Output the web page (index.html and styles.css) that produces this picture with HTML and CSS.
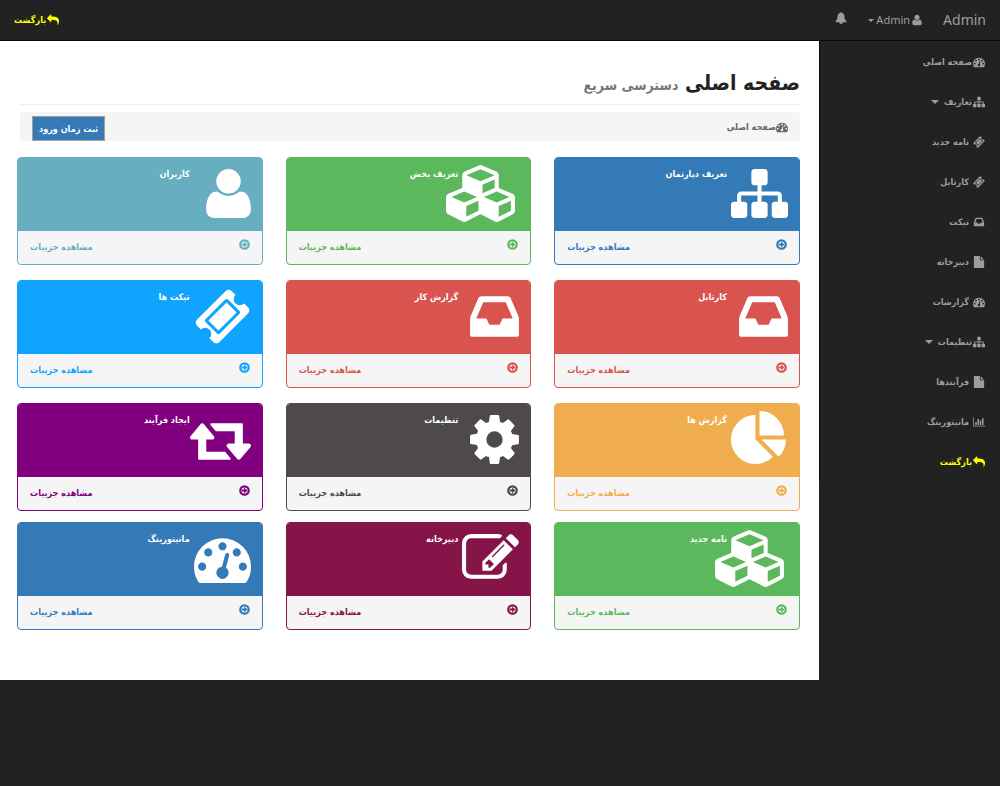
FILE: index.html
```html
<!DOCTYPE html>
<html lang="fa" dir="rtl">
<head>
<meta charset="utf-8">
<meta name="viewport" content="width=device-width, initial-scale=1">
<title>صفحه اصلی</title>
<link rel="stylesheet" href="styles.css">
</head>
<body>
<svg class="sprite" aria-hidden="true">
  <symbol id="sitemap" viewBox="0 0 1792 1792"><path d="M1792 1248v320q0 40-28 68t-68 28h-320q-40 0-68-28t-28-68v-320q0-40 28-68t68-28h96v-192h-512v192h96q40 0 68 28t28 68v320q0 40-28 68t-68 28h-320q-40 0-68-28t-28-68v-320q0-40 28-68t68-28h96v-192h-512v192h96q40 0 68 28t28 68v320q0 40-28 68t-68 28h-320q-40 0-68-28t-28-68v-320q0-40 28-68t68-28h96v-192q0-52 38-90t90-38h512v-192h-96q-40 0-68-28t-28-68v-320q0-40 28-68t68-28h320q40 0 68 28t28 68v320q0 40-28 68t-68 28h-96v192h512q52 0 90 38t38 90v192h96q40 0 68 28t28 68z"/></symbol>
  <symbol id="user" viewBox="192 0 1408 1792"><path d="M1600 1405q0 120-73 189.500t-194 69.500h-874q-121 0-194-69.500t-73-189.500q0-53 3.500-103.500t14-109 26.500-108.500 43-97.500 62-81 85.500-53.500 111.500-20q9 0 42 21.500t74.500 48 108 48 133.500 21.500 133.500-21.500 108-48 74.500-48 42-21.500q61 0 111.500 20t85.500 53.500 62 81 43 97.500 26.500 108.500 14 109 3.500 103.500zm-320-893q0 159-112.500 271.500t-271.500 112.500-271.500-112.500-112.500-271.500 112.500-271.500 271.500-112.500 271.500 112.500 112.500 271.500z"/></symbol>
  <symbol id="bell" viewBox="0 0 1792 1792"><path d="M912 1696q0-16-16-16-59 0-101.500-42.500t-42.500-101.500q0-16-16-16t-16 16q0 73 51.500 124.500t124.500 51.500q16 0 16-16zm816-288q0 52-38 90t-90 38h-448q0 106-75 181t-181 75-181-75-75-181h-448q-52 0-90-38t-38-90q50-42 91-88t85-119.500 74.500-158.500 50-206 19.500-260q0-152 117-282.500t307-158.500q-8-19-8-39 0-40 28-68t68-28 68 28 28 68q0 20-8 39 190 28 307 158.500t117 282.500q0 139 19.500 260t50 206 74.500 158.500 85 119.500 91 88z"/></symbol>
  <symbol id="inbox" viewBox="128 0 1536 1792"><path d="M1151 960h316q-1-3-2.500-8.500t-2.500-7.500l-212-496h-708l-212 496q-1 3-2.500 8t-2.500 8h316l95 192h320zm513 30v482q0 26-19 45t-45 19h-1408q-26 0-45-19t-19-45v-482q0-62 25-123l238-552q10-25 36.500-42t52.500-17h832q26 0 52.500 17t36.500 42l238 552q25 61 25 123z"/></symbol>
  <symbol id="cog" viewBox="128 0 1536 1792"><path d="M1152 896q0-106-75-181t-181-75-181 75-75 181 75 181 181 75 181-75 75-181zm512-109v222q0 12-8 23t-20 13l-185 28q-19 54-39 91 35 50 107 138 10 12 10 25t-9 23q-27 37-99 108t-94 71q-12 0-26-9l-138-108q-44 23-91 38-16 136-29 186-7 28-36 28h-222q-14 0-24.500-8.500t-11.500-21.500l-28-184q-49-16-90-37l-141 107q-10 9-25 9-14 0-25-11-126-114-165-168-7-10-7-23 0-12 8-23 15-21 51-66.500t54-70.500q-27-50-41-99l-183-27q-13-2-21-12.500t-8-23.500v-222q0-12 8-23t19-13l186-28q14-46 39-92-40-57-107-138-10-12-10-24 0-10 9-23 26-36 98.500-107.500t94.500-71.500q13 0 26 10l138 107q44-23 91-38 16-136 29-186 7-28 36-28h222q14 0 24.500 8.500t11.500 21.500l28 184q49 16 90 37l142-107q9-9 24-9 13 0 25 10 129 119 165 170 7 8 7 22 0 12-8 23-15 21-51 66.500t-54 70.500q26 50 41 98l183 28q13 2 21 12.500t8 23.500z"/></symbol>
  <symbol id="pie" viewBox="0 0 1792 1792"><path d="M768 890l546 546q-106 108-247.500 168t-298.500 60q-209 0-385.500-103t-279.500-279.500-103-385.500 103-385.500 279.500-279.500 385.500-103v762zm187 6h773q0 157-60 298.500t-168 247.500zm709-128h-768v-768q209 0 385.500 103t279.500 279.500 103 385.500z"/></symbol>
  <symbol id="retweet" viewBox="0 0 1920 1792"><path d="M1280 1504q0 13-9.500 22.500t-22.500 9.500h-960q-8 0-13.500-2t-9-7-5.500-8-3-11.500-1-11.500v-600h-192q-26 0-45-19t-19-45q0-24 15-41l320-384q19-22 49-22t49 22l320 384q15 17 15 41 0 26-19 45t-45 19h-192v384h576q16 0 25 11l160 192q7 10 7 21zm640-416q0 24-15 41l-320 384q-20 23-49 23t-49-23l-320-384q-15-17-15-41 0-26 19-45t45-19h192v-384h-576q-16 0-25-12l-160-192q-7-9-7-20 0-13 9.500-22.500t22.500-9.500h960q8 0 13.500 2t9 7 5.500 8 3 11.500 1 11.500v600h192q26 0 45 19t19 45z"/></symbol>
  <symbol id="ticket" viewBox="0 0 1792 1792"><path d="M1024 452l316 316-572 572-316-316zm-211 979l618-618q19-19 19-45t-19-45l-362-362q-18-18-45-18t-45 18l-618 618q-19 19-19 45t19 45l362 362q18 18 45 18t45-18zm889-637l-907 908q-37 37-90.500 37t-90.500-37l-126-126q56-56 56-136t-56-136-136-56-136 56l-125-126q-37-37-37-90.500t37-90.500l907-906q37-37 90.500-37t90.500 37l125 125q-56 56-56 136t56 136 136 56 136-56l126 125q37 37 37 90.500t-37 90.500z"/></symbol>
  <symbol id="gauge" viewBox="0 0 1792 1792"><path d="M384 1152q0-53-37.500-90.500t-90.500-37.500-90.500 37.500-37.500 90.500 37.500 90.500 90.500 37.500 90.500-37.500 37.500-90.500zm192-448q0-53-37.500-90.500t-90.500-37.500-90.500 37.500-37.500 90.500 37.500 90.500 90.500 37.500 90.500-37.500 37.500-90.500zm428 481l101-382q6-26-7.500-48.500t-38.500-29.500-48 6.500-30 39.500l-101 382q-60 5-107 43.500t-63 98.500q-20 77 20 146t117 89 146-20 89-117q16-60-6-117t-72-91zm660-33q0-53-37.500-90.500t-90.500-37.500-90.500 37.500-37.500 90.500 37.500 90.500 90.500 37.500 90.500-37.500 37.500-90.500zm-640-640q0-53-37.500-90.500t-90.500-37.500-90.500 37.500-37.500 90.500 37.500 90.500 90.500 37.500 90.500-37.500 37.500-90.500zm448 192q0-53-37.500-90.500t-90.500-37.500-90.500 37.500-37.500 90.500 37.500 90.500 90.500 37.500 90.500-37.500 37.500-90.500zm320 448q0 261-141 483-19 29-54 29h-1402q-35 0-54-29-141-221-141-483 0-182 71-348t191-286 286-191 348-71 348 71 286 191 191 286 71 348z"/></symbol>
  <symbol id="cubes" viewBox="0 0 2304 1792"><path d="M640 1632l384-192v-314l-384 164v342zm-64-454l404-173-404-173-404 173zm1088 454l384-192v-314l-384 164v342zm-64-454l404-173-404-173-404 173zm-448-293l384-165v-266l-384 164v267zm-64-379l441-189-441-189-441 189zm1088 518v416q0 36-19 67t-52 47l-448 224q-25 14-57 14t-57-14l-448-224q-4-2-7-4-2 2-7 4l-448 224q-25 14-57 14t-57-14l-448-224q-33-16-52-47t-19-67v-416q0-38 21.500-70t56.500-48l434-186v-400q0-38 21.500-70t56.500-48l448-192q23-10 50-10t50 10l448 192q35 16 56.500 48t21.500 70v400l434 186q36 16 57 48t21 70z"/></symbol>
  <symbol id="edit" viewBox="0 0 1792 1792"><path d="M888 1184l116-116-152-152-116 116v56h96v96h56zm440-720q-16-16-33 1l-350 350q-17 17-1 33t33-1l350-350q17-17 1-33zm80 594v190q0 119-84.500 203.500t-203.500 84.500h-832q-119 0-203.500-84.500t-84.500-203.500v-832q0-119 84.500-203.500t203.500-84.500h832q63 0 117 25 15 7 18 23 3 17-9 29l-49 49q-14 14-32 8-23-6-45-6h-832q-66 0-113 47t-47 113v832q0 66 47 113t113 47h832q66 0 113-47t47-113v-126q0-13 9-22l64-64q15-15 35-7t20 29zm-96-738l288 288-672 672h-288v-288zm444 132l-92 92-288-288 92-92q28-28 68-28t68 28l152 152q28 28 28 68t-28 68z"/></symbol>
  <symbol id="file" viewBox="128 0 1536 1792"><path d="M1152 512v-472q22 14 36 28l408 408q14 14 28 36h-472zm-128 32q0 40 28 68t68 28h544v1056q0 40-28 68t-68 28h-1344q-40 0-68-28t-28-68v-1600q0-40 28-68t68-28h800v544z"/></symbol>
  <symbol id="chart" viewBox="0 0 2048 1792"><path d="M640 896v512h-256v-512h256zm384-512v1024h-256v-1024h256zm1024 1152v128h-2048v-1536h128v1408h1920zm-640-896v768h-256v-768h256zm384-384v1152h-256v-1152h256z"/></symbol>
  <symbol id="reply" viewBox="0 0 1792 1792"><path transform="matrix(-1 0 0 1 1792 0)" d="M1792 640q0 26-19 45l-512 512q-19 19-45 19t-45-19-19-45v-256h-224q-98 0-175.500 6t-154 21.500-133 42.500-105.500 69.500-80 101-48.500 138.500-17.500 181q0 55 5 123 0 6 2.500 23.500t2.500 26.500q0 15-8.500 25t-23.500 10q-16 0-28-17-7-9-13-22t-13.500-30-10.500-24q-127-285-127-451 0-199 53-333 162-403 875-403h224v-256q0-26 19-45t45-19 45 19l512 512q19 19 19 45z"/></symbol>
  <symbol id="go" viewBox="0 0 12 12"><circle cx="6" cy="6" r="4.600" fill="none" stroke="currentColor" stroke-width="2.400"/><path d="M3 4.800h2.600v-2.200l3.600 3.400-3.600 3.400v-2.200h-2.600z"/></symbol>
</svg>

<header class="topbar">
  <a class="brand" href="#">Admin</a>
  <button class="top-item" type="button"><svg class="icon-user"><use href="#user"/></svg><span>Admin</span><i class="caret"></i></button>
  <button class="top-item bell" type="button" aria-label="اعلان‌ها"><svg class="icon"><use href="#bell"/></svg></button>
  <a class="back" href="#"><svg class="icon"><use href="#reply"/></svg>بازگشت</a>
</header>

<div class="layout">
  <nav class="sidebar">
    <a href="#"><svg class="icon"><use href="#gauge"/></svg>صفحه اصلی</a>
    <a href="#"><svg class="icon"><use href="#sitemap"/></svg>تعاریف<i class="caret"></i></a>
    <a class="spaced" href="#"><svg class="icon"><use href="#ticket"/></svg>نامه جدید</a>
    <a class="spaced" href="#"><svg class="icon"><use href="#ticket"/></svg>کارتابل</a>
    <a class="spaced" href="#"><svg class="icon"><use href="#inbox"/></svg>تیکت</a>
    <a class="spaced" href="#"><svg class="icon"><use href="#file"/></svg>دبیرخانه</a>
    <a class="spaced" href="#"><svg class="icon"><use href="#gauge"/></svg>گزارشات</a>
    <a href="#"><svg class="icon"><use href="#sitemap"/></svg>تنظیمات<i class="caret"></i></a>
    <a class="spaced" href="#"><svg class="icon"><use href="#file"/></svg>فرآیندها</a>
    <a class="spaced" href="#"><svg class="icon"><use href="#chart"/></svg>مانیتورینگ</a>
    <a class="back" href="#"><svg class="icon"><use href="#reply"/></svg>بازگشت</a>
  </nav>

  <main class="page">
    <h1 class="title">صفحه اصلی <small>دسترسی سریع</small></h1>
    <div class="breadcrumb">
      <span class="crumb"><svg class="icon"><use href="#gauge"/></svg>صفحه اصلی</span>
      <button class="enter" type="button">ثبت زمان ورود</button>
    </div>

    <div class="cards">
      <section class="card blue"><div class="head"><div class="pic"><svg class="w57"><use href="#sitemap"/></svg></div><h2>تعریف دپارتمان</h2></div><a class="more" href="#"><svg><use href="#go"/></svg>مشاهده جزییات</a></section>
      <section class="card green"><div class="head"><div class="pic"><svg class="w73"><use href="#cubes"/></svg></div><h2>تعریف بخش</h2></div><a class="more" href="#"><svg><use href="#go"/></svg>مشاهده جزییات</a></section>
      <section class="card teal"><div class="head"><div class="pic"><svg class="w45"><use href="#user"/></svg></div><h2>کاربران</h2></div><a class="more" href="#"><svg><use href="#go"/></svg>مشاهده جزییات</a></section>
      <section class="card red"><div class="head"><div class="pic"><svg class="w49"><use href="#inbox"/></svg></div><h2>کارتابل</h2></div><a class="more" href="#"><svg><use href="#go"/></svg>مشاهده جزییات</a></section>
      <section class="card red"><div class="head"><div class="pic"><svg class="w49"><use href="#inbox"/></svg></div><h2>گزارش کار</h2></div><a class="more" href="#"><svg><use href="#go"/></svg>مشاهده جزییات</a></section>
      <section class="card sky"><div class="head"><div class="pic"><svg class="w57"><use href="#ticket"/></svg></div><h2>تیکت ها</h2></div><a class="more" href="#"><svg><use href="#go"/></svg>مشاهده جزییات</a></section>
      <section class="card orange"><div class="head"><div class="pic"><svg class="w57"><use href="#pie"/></svg></div><h2>گزارش ها</h2></div><a class="more" href="#"><svg><use href="#go"/></svg>مشاهده جزییات</a></section>
      <section class="card grey"><div class="head"><div class="pic"><svg class="w49"><use href="#cog"/></svg></div><h2>تنظیمات</h2></div><a class="more" href="#"><svg><use href="#go"/></svg>مشاهده جزییات</a></section>
      <section class="card purple"><div class="head"><div class="pic"><svg class="w61"><use href="#retweet"/></svg></div><h2>ایجاد فرآیند</h2></div><a class="more" href="#"><svg><use href="#go"/></svg>مشاهده جزییات</a></section>
    </div>
    <div class="cards last">
      <section class="card green"><div class="head"><div class="pic"><svg class="w73"><use href="#cubes"/></svg></div><h2>نامه جدید</h2></div><a class="more" href="#"><svg><use href="#go"/></svg>مشاهده جزییات</a></section>
      <section class="card wine"><div class="head"><div class="pic"><svg class="w57"><use href="#edit"/></svg></div><h2>دبیرخانه</h2></div><a class="more" href="#"><svg><use href="#go"/></svg>مشاهده جزییات</a></section>
      <section class="card blue"><div class="head"><div class="pic"><svg class="w57"><use href="#gauge"/></svg></div><h2>مانیتورینگ</h2></div><a class="more" href="#"><svg><use href="#go"/></svg>مشاهده جزییات</a></section>
    </div>
  </main>
</div>
</body>
</html>
```
FILE: styles.css
```css
* { box-sizing: border-box; }
body {
  margin: 0;
  min-height: 100vh;
  background: #222;
  color: #222;
  font: 9px/16px "DejaVu Sans Condensed", "DejaVu Sans", sans-serif;
}
a { color: inherit; text-decoration: none; }
button { font: inherit; color: inherit; cursor: pointer; }
svg { display: block; flex: none; fill: currentColor; overflow: visible; }
.sprite { position: absolute; width: 0; height: 0; }
.icon { width: 12px; height: 12px; }
.icon-user { width: 10px; height: 12px; }
.caret {
  border: 3px solid transparent;
  border-top-color: currentColor;
  border-bottom: 0;
}

.topbar {
  display: flex;
  align-items: center;
  height: 41px;
  padding: 0 14px;
  border-bottom: 1px solid #080808;
  color: #9d9d9d;
}
.brand { font: 14px/20px "Noto Sans", sans-serif; }
.top-item {
  display: flex;
  align-items: center;
  gap: 2px;
  margin-right: 21px;
  padding: 0;
  border: 0;
  background: none;
  font: 11px/16px "Noto Sans", sans-serif;
}
.bell { padding-bottom: 4px; }
.back { display: flex; align-items: center; color: #ff0; font-weight: bold; }
.topbar .back { margin-right: auto; }
.topbar .icon { margin-left: 1px; }

.layout { display: flex; align-items: flex-start; }
.sidebar {
  flex: 0 0 181px;
  border-left: 1px solid #080808;
  color: #9d9d9d;
  font-weight: bold;
}
.sidebar a {
  display: flex;
  align-items: center;
  gap: 1px;
  height: 40px;
  padding: 2px 15px 0;
}
.sidebar .spaced { gap: 4px; }
.sidebar .caret { margin-right: 4px; border-width: 4px 4px 0; }

.page {
  flex: 1;
  min-width: 0;
  padding: 24px 19px 50px 17px;
  background: #fff;
}
.title {
  margin: 0 0 7px 3px;
  padding-bottom: 3px;
  border-bottom: 1px solid #eee;
  font-size: 21px;
  font-weight: bold;
  line-height: 36px;
}
.title small { color: #777; font-size: 14px; font-weight: bold; line-height: 16px; }
.breadcrumb {
  display: flex;
  justify-content: space-between;
  align-items: flex-start;
  height: 29px;
  margin-left: 3px;
  padding: 4px 12px 0;
  border-radius: 4px;
  background: #f5f5f5;
}
.crumb { display: flex; align-items: center; height: 22px; color: #666; font-weight: bold; }
.enter {
  height: 25px;
  padding: 0 6px;
  border: 1px solid #a89c96;
  background: #337ab7;
  color: #fff;
  font-weight: bold;
}

.cards {
  display: grid;
  grid-template-columns: repeat(3, 1fr);
  gap: 15px 23px;
  margin-top: 16px;
}
.last { margin-top: 11px; }
.card {
  overflow: hidden;
  border: 1px solid var(--tone);
  border-radius: 4px;
  background: #f5f5f5;
}
.head {
  display: flex;
  height: 73px;
  padding: 7px 11px;
  background: var(--tone);
  color: #fff;
}
.pic { flex: 0 0 61px; min-width: 0; }
.pic svg { height: 57px; }
.head h2 { margin: 1px 0 0; font-size: 9px; line-height: 16px; }
.w45 { width: 45px; }
.w49 { width: 49px; }
.w57 { width: 57px; }
.w61 { width: 61px; }
.w73 { width: 73px; }
.more {
  display: flex;
  justify-content: space-between;
  height: 33px;
  padding: 8px 12px 0;
  color: var(--tone);
  font-weight: bold;
}
.more svg { width: 11px; height: 11px; }
.blue { --tone: #337ab7; }
.green { --tone: #5cb85c; }
.teal { --tone: #67aec1; }
.red { --tone: #d9534f; }
.sky { --tone: #10a4ff; }
.orange { --tone: #f0ad4e; }
.grey { --tone: #4d494c; }
.purple { --tone: #800080; }
.wine { --tone: #851448; }
```
